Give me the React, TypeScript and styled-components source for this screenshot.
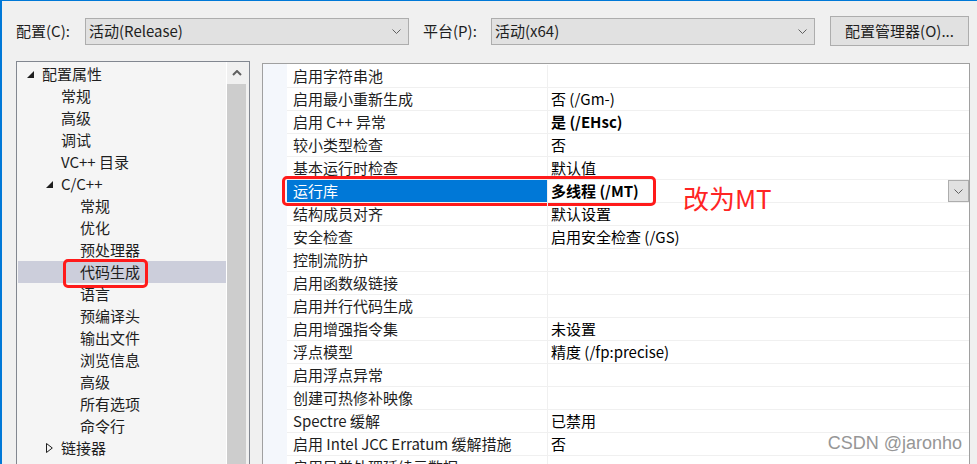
import React from 'react';
import styled, { createGlobalStyle, css } from 'styled-components';

const uiFont = `"Noto Sans CJK SC", "Microsoft YaHei UI", sans-serif`;

const GlobalStyle = createGlobalStyle`
  html, body {
    margin: 0;
    padding: 0;
    background: #f0f0f0;
    overflow: hidden;
  }
  #root {
    width: 977px;
    height: 464px;
  }
`;

const Window = styled.div`
  position: relative;
  box-sizing: border-box;
  width: 977px;
  height: 464px;
  overflow: hidden;
  background: #f0f0f0;
  border-top: 1px solid #0078d7;
  border-left: 2px solid #0078d7;
  font-family: ${uiFont};
  font-size: 15px;
  color: #1e1e1e;
`;

const Toolbar = styled.div`
  display: flex;
  align-items: center;
  height: 60px;
  padding-left: 14px;
`;

const FieldLabel = styled.span<{ $width: number; $gap?: number }>`
  width: ${({ $width }) => $width}px;
  margin-left: ${({ $gap }) => $gap ?? 0}px;
  line-height: 20px;
  white-space: nowrap;
`;

const ComboBox = styled.div<{ $width: number }>`
  box-sizing: border-box;
  display: flex;
  align-items: center;
  justify-content: space-between;
  width: ${({ $width }) => $width}px;
  height: 27px;
  padding: 0 7px 0 3px;
  background: #e1e1e1;
  border: 1px solid #adadad;
  line-height: 20px;
  white-space: nowrap;
`;

const PushButton = styled.div`
  box-sizing: border-box;
  display: flex;
  align-items: center;
  justify-content: center;
  width: 139px;
  height: 30px;
  margin-left: 15px;
  background: #e1e1e1;
  border: 1px solid #adadad;
  line-height: 20px;
  white-space: nowrap;
`;

const Body = styled.div`
  display: flex;
  align-items: flex-start;
  gap: 12px;
  padding-left: 14px;
`;

const TreePanel = styled.div`
  box-sizing: border-box;
  display: flex;
  width: 234px;
  height: 420px;
  background: #f5f5f5;
  border: 1px solid #828790;
`;

const TreeList = styled.div`
  flex: 1;
  padding: 1px 0 0 1px;
`;

const TreeRow = styled.div<{ $level: number; $selected?: boolean }>`
  position: relative;
  display: flex;
  align-items: center;
  height: 22px;
  padding-left: ${({ $level }) => 5 + $level * 19}px;
  line-height: 22px;
  white-space: nowrap;
  ${({ $selected }) =>
    $selected &&
    css`
      background: #cccedb;
    `}
`;

const Expander = styled.span`
  display: flex;
  align-items: center;
  width: 19px;
  height: 22px;
  padding-left: 4px;
  box-sizing: border-box;
`;

const ScrollBar = styled.div`
  display: flex;
  flex-direction: column;
  width: 22px;
  border-left: 1px solid #ffffff;
  background: #f0f0f0;
`;

const ScrollArrow = styled.div`
  display: flex;
  align-items: center;
  justify-content: center;
  width: 19px;
  height: 22px;
`;

const ScrollThumb = styled.div`
  width: 19px;
  flex: 1;
  background: #cdcdcd;
`;

const PropertyPanel = styled.div`
  box-sizing: border-box;
  display: flex;
  width: 708px;
  height: 420px;
  margin-top: 2px;
  background: #ffffff;
  border: 1px solid #a0a0a0;
`;

const CategoryMargin = styled.div`
  width: 24px;
  background: #f4f7fc;
`;

const PropertyGrid = styled.div`
  flex: 1;
  padding-top: 1px;
`;

const PropertyRow = styled.div`
  position: relative;
  box-sizing: border-box;
  display: grid;
  grid-template-columns: 261px 1fr;
  height: 23px;
  border-bottom: 1px solid #f0f0f0;
  line-height: 22px;
  white-space: nowrap;
`;

const NameCell = styled.div<{ $selected?: boolean }>`
  padding-left: 6px;
  border-right: 1px solid #f0f0f0;
  ${({ $selected }) =>
    $selected &&
    css`
      background: #0078d7;
      color: #ffffff;
    `}
`;

const ValueCell = styled.div<{ $bold?: boolean }>`
  display: flex;
  align-items: center;
  padding-left: 3px;
  font-weight: ${({ $bold }) => ($bold ? 700 : 400)};
  color: #000000;
`;

const DropButton = styled.div`
  box-sizing: border-box;
  display: flex;
  align-items: center;
  justify-content: center;
  width: 21px;
  height: 22px;
  margin-left: auto;
  background: #e1e1e1;
  border: 1px solid #adadad;
`;

const RedMark = styled.div<{ $left: number; $top: number; $width: number; $height: number }>`
  position: absolute;
  left: ${({ $left }) => $left}px;
  top: ${({ $top }) => $top}px;
  width: ${({ $width }) => $width}px;
  height: ${({ $height }) => $height}px;
  box-sizing: border-box;
  border: 3px solid #ff1a1a;
  border-radius: 5px;
  pointer-events: none;
`;

const RedNote = styled.span`
  position: absolute;
  left: 396px;
  top: 3px;
  font-size: 26px;
  line-height: 30px;
  color: #ff2424;
`;

const Watermark = styled.span`
  position: absolute;
  right: 15px;
  bottom: 10px;
  font-family: "Liberation Sans", Arial, sans-serif;
  font-size: 18px;
  color: #969696;
`;

const Chevron = ({ color = '#606060' }: { color?: string }) => (
  <svg width="9" height="5" viewBox="0 0 9 5">
    <polyline points="0.5,0.5 4.5,4.5 8.5,0.5" fill="none" stroke={color} strokeWidth="1" />
  </svg>
);

const OpenTriangle = () => (
  <svg width="7" height="7" viewBox="0 0 7 7">
    <polygon points="7,0 7,7 0,7" fill="#1e1e1e" />
  </svg>
);

const ClosedTriangle = () => (
  <svg width="7" height="10" viewBox="0 0 7 10">
    <polygon points="0.5,0.5 6.3,5 0.5,9.5" fill="none" stroke="#1e1e1e" strokeWidth="1" />
  </svg>
);

type TreeItem = {
  label: string;
  level: number;
  expander?: 'open' | 'closed';
  selected?: boolean;
};

const treeItems: TreeItem[] = [
  { label: '配置属性', level: 0, expander: 'open' },
  { label: '常规', level: 1 },
  { label: '高级', level: 1 },
  { label: '调试', level: 1 },
  { label: 'VC++ 目录', level: 1 },
  { label: 'C/C++', level: 1, expander: 'open' },
  { label: '常规', level: 2 },
  { label: '优化', level: 2 },
  { label: '预处理器', level: 2 },
  { label: '代码生成', level: 2, selected: true },
  { label: '语言', level: 2 },
  { label: '预编译头', level: 2 },
  { label: '输出文件', level: 2 },
  { label: '浏览信息', level: 2 },
  { label: '高级', level: 2 },
  { label: '所有选项', level: 2 },
  { label: '命令行', level: 2 },
  { label: '链接器', level: 1, expander: 'closed' },
];

type Property = {
  name: string;
  value?: string;
  bold?: boolean;
  selected?: boolean;
};

const properties: Property[] = [
  { name: '启用字符串池' },
  { name: '启用最小重新生成', value: '否 (/Gm-)' },
  { name: '启用 C++ 异常', value: '是 (/EHsc)', bold: true },
  { name: '较小类型检查', value: '否' },
  { name: '基本运行时检查', value: '默认值' },
  { name: '运行库', value: '多线程 (/MT)', bold: true, selected: true },
  { name: '结构成员对齐', value: '默认设置' },
  { name: '安全检查', value: '启用安全检查 (/GS)' },
  { name: '控制流防护' },
  { name: '启用函数级链接' },
  { name: '启用并行代码生成' },
  { name: '启用增强指令集', value: '未设置' },
  { name: '浮点模型', value: '精度 (/fp:precise)' },
  { name: '启用浮点异常' },
  { name: '创建可热修补映像' },
  { name: 'Spectre 缓解', value: '已禁用' },
  { name: '启用 Intel JCC Erratum 缓解措施', value: '否' },
  { name: '启用异常处理延续元数据' },
];

export default function App() {
  return (
    <>
      <GlobalStyle />
      <Window>
        <Toolbar>
          <FieldLabel $width={69}>配置(C):</FieldLabel>
          <ComboBox $width={324}>
            活动(Release)
            <Chevron />
          </ComboBox>
          <FieldLabel $width={68} $gap={14}>
            平台(P):
          </FieldLabel>
          <ComboBox $width={324}>
            活动(x64)
            <Chevron />
          </ComboBox>
          <PushButton>配置管理器(O)...</PushButton>
        </Toolbar>

        <Body>
          <TreePanel>
            <TreeList>
              {treeItems.map((item, i) => (
                <TreeRow key={i} $level={item.level} $selected={item.selected}>
                  {item.expander && (
                    <Expander>{item.expander === 'open' ? <OpenTriangle /> : <ClosedTriangle />}</Expander>
                  )}
                  {!item.expander && <Expander />}
                  {item.label}
                  {item.selected && <RedMark $left={45} $top={-2} $width={85} $height={29} />}
                </TreeRow>
              ))}
            </TreeList>
            <ScrollBar>
              <ScrollArrow>
                <svg width="10" height="6" viewBox="0 0 10 6">
                  <polyline points="1,5 5,1 9,5" fill="none" stroke="#606060" strokeWidth="2" />
                </svg>
              </ScrollArrow>
              <ScrollThumb />
            </ScrollBar>
          </TreePanel>

          <PropertyPanel>
            <CategoryMargin />
            <PropertyGrid>
              {properties.map((p, i) => (
                <PropertyRow key={i}>
                  <NameCell $selected={p.selected}>{p.name}</NameCell>
                  <ValueCell $bold={p.bold}>
                    {p.value}
                    {p.selected && (
                      <DropButton>
                        <Chevron />
                      </DropButton>
                    )}
                  </ValueCell>
                  {p.selected && (
                    <>
                      <RedMark $left={-5} $top={-4} $width={374} $height={30} />
                      <RedNote>改为MT</RedNote>
                    </>
                  )}
                </PropertyRow>
              ))}
            </PropertyGrid>
          </PropertyPanel>
        </Body>

        <Watermark>CSDN @jaronho</Watermark>
      </Window>
    </>
  );
}
